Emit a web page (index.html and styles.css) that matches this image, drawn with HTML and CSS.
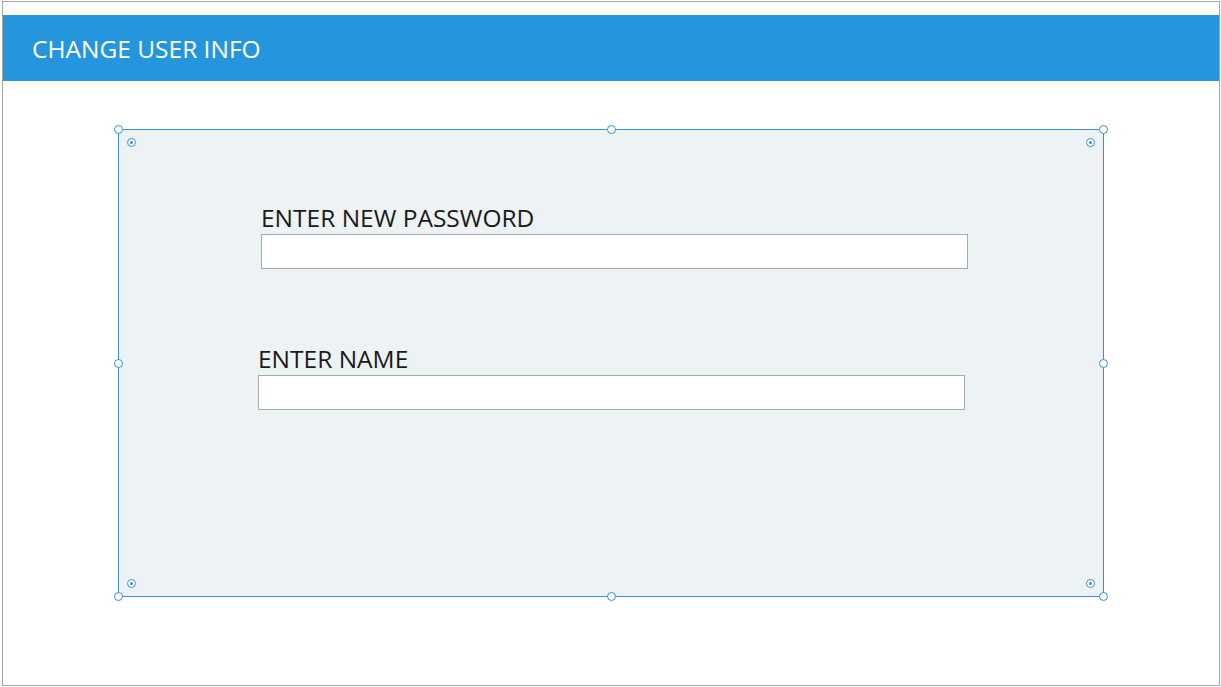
FILE: index.html
```html
<!DOCTYPE html>
<html>
<head>
<meta charset="utf-8">
<link rel="stylesheet" href="styles.css">
</head>
<body>
<div class="frame">
  <header class="topbar">
    <h1 class="title">CHANGE USER INFO</h1>
  </header>
  <main class="canvas">
    <section class="panel">
      <span class="handle h-tl"></span>
      <span class="handle h-tc"></span>
      <span class="handle h-tr"></span>
      <span class="handle h-ml"></span>
      <span class="handle h-mr"></span>
      <span class="handle h-bl"></span>
      <span class="handle h-bc"></span>
      <span class="handle h-br"></span>
      <span class="pin p-tl"></span>
      <span class="pin p-tr"></span>
      <span class="pin p-bl"></span>
      <span class="pin p-br"></span>
      <div class="field field-pass">
        <label class="label">ENTER NEW PASSWORD</label>
        <input class="input" type="password">
      </div>
      <div class="field field-name">
        <label class="label">ENTER NAME</label>
        <input class="input" type="text">
      </div>
    </section>
  </main>
</div>
</body>
</html>
```

FILE: styles.css
```css
* { box-sizing: border-box; }
html, body { margin: 0; padding: 0; background: #ffffff; }
body { font-family: "Open Sans", "Noto Sans", sans-serif; }

.frame {
  margin: 1px 0 0 2px;
  width: 1218px;
  height: 685px;
  border: 1px solid #a6a6a6;
  padding-top: 13px;
  background: #fff;
}

.topbar {
  height: 66px;
  background: #2596de;
  display: flex;
  align-items: center;
  padding-left: 29px;
}
.title {
  margin: 0;
  color: #ffffff;
  font-weight: 400;
  font-size: 24.5px;
  line-height: 30px;
  padding-top: 2px;
}

.canvas {
  padding: 48px 0 0 115px;
}

.panel {
  position: relative;
  width: 986px;
  height: 468px;
  border: 1px solid #3a8fd6;
  background: #edf2f5;
  padding-top: 72px;
}

.handle {
  position: absolute;
  width: 9px;
  height: 9px;
  border-radius: 50%;
  border: 1px solid #3a8fd6;
  background: #fff;
}
.h-tl { left: -5px; top: -5px; }
.h-tc { left: 488px; top: -5px; }
.h-tr { right: -5px; top: -5px; }
.h-ml { left: -5px; top: 229px; }
.h-mr { right: -5px; top: 229px; }
.h-bl { left: -5px; bottom: -5px; }
.h-bc { left: 488px; bottom: -5px; }
.h-br { right: -5px; bottom: -5px; }

.pin {
  position: absolute;
  width: 9px;
  height: 9px;
  border-radius: 50%;
  border: 1px solid #3a8fd6;
  background: #fff;
}
.pin::after {
  content: "";
  position: absolute;
  left: 2px;
  top: 2px;
  width: 3px;
  height: 3px;
  border-radius: 50%;
  background: #3a8fd6;
}
.p-tl { left: 8px; top: 8px; }
.p-tr { right: 8px; top: 8px; }
.p-bl { left: 8px; bottom: 8px; }
.p-br { right: 8px; bottom: 8px; }

.field {
  display: flex;
  flex-direction: column;
  width: 707px;
}
.field-pass { margin-left: 142px; }
.field-name { margin-left: 139px; margin-top: 74px; }

.label {
  font-size: 24.5px;
  line-height: 32px;
  color: #1a1a1a;
  padding-left: 0;
}
.input {
  margin-top: 0;
  height: 35px;
  width: 707px;
  border: 1px solid #a9a9a9;
  background: #fff;
  outline: none;
  padding: 0 6px;
  font: inherit;
}
```
